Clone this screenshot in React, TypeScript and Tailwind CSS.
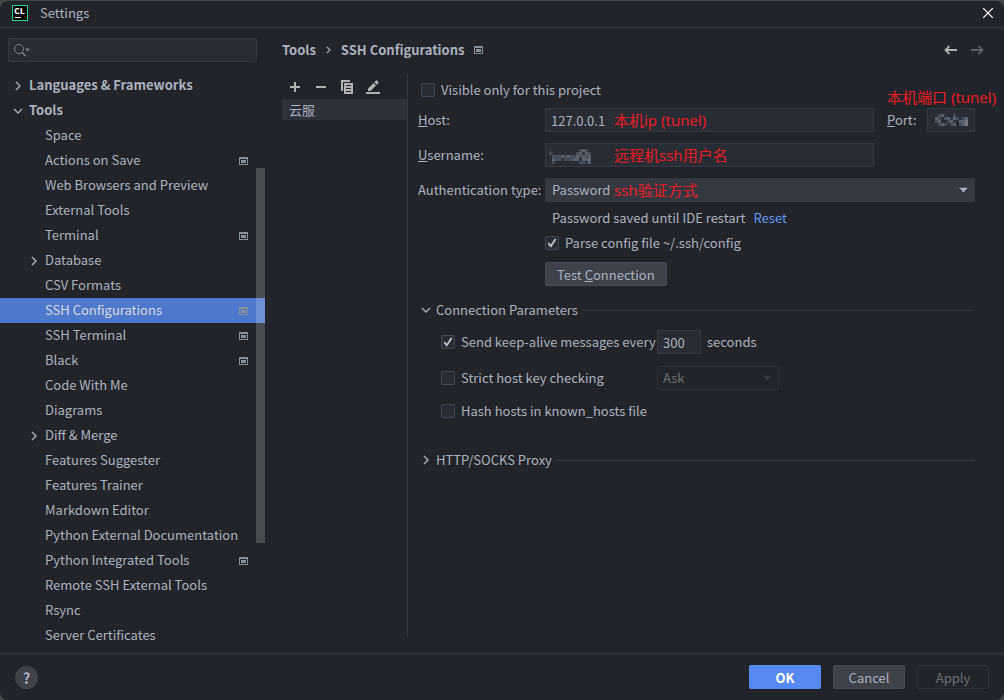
import type { ReactNode } from "react";

type TreeItem = {
  label: string;
  level?: "group" | "item";
  state?: "open" | "closed";
  project?: boolean;
  selected?: boolean;
};

const TREE: TreeItem[] = [
  { label: "Languages & Frameworks", level: "group", state: "closed" },
  { label: "Tools", level: "group", state: "open" },
  { label: "Space" },
  { label: "Actions on Save", project: true },
  { label: "Web Browsers and Preview" },
  { label: "External Tools" },
  { label: "Terminal", project: true },
  { label: "Database", state: "closed" },
  { label: "CSV Formats" },
  { label: "SSH Configurations", project: true, selected: true },
  { label: "SSH Terminal", project: true },
  { label: "Black", project: true },
  { label: "Code With Me" },
  { label: "Diagrams" },
  { label: "Diff & Merge", state: "closed" },
  { label: "Features Suggester" },
  { label: "Features Trainer" },
  { label: "Markdown Editor" },
  { label: "Python External Documentation" },
  { label: "Python Integrated Tools", project: true },
  { label: "Remote SSH External Tools" },
  { label: "Rsync" },
  { label: "Server Certificates" },
];

// rows of 3px blocks, "." is an empty block
const USER_BLOCKS = ["a.........bcb.", "ba.a.a.a.bcacb", ".bbbcbcbbcbcbc", ".cbbabbbccaccc", ".b........bbac"];
const PORT_BLOCKS = [".bca..b....", "cb.bcacb.bc", "bc..bca.ccd", ".bcb.bc.bcd"];
const BLOCK_COLORS: Record<string, string> = { a: "#30363f", b: "#454d59", c: "#59616d", d: "#73777f" };

function Mosaic({ rows }: { rows: string[] }) {
  return (
    <svg width={rows[0].length * 3} height={rows.length * 3} shapeRendering="crispEdges" aria-hidden="true">
      {rows.flatMap((row, y) =>
        row.split("").map((c, x) => (c === "." ? null : <rect key={`${x}-${y}`} x={x * 3} y={y * 3} width="3" height="3" fill={BLOCK_COLORS[c]} />)),
      )}
    </svg>
  );
}

function Chevron({ open }: { open?: boolean }) {
  return (
    <svg width="10" height="10" viewBox="0 0 10 10" fill="none" stroke="#a4a9b0" strokeWidth="1.5" aria-hidden="true">
      <path d={open ? "M1 3l4 4 4-4" : "M3 1l4 4-4 4"} />
    </svg>
  );
}

function ProjectIcon() {
  return (
    <svg width="9" height="8" shapeRendering="crispEdges" aria-hidden="true">
      <path d="M0 0h9v8H0zM1 2v5h7V2z" fillRule="evenodd" fill="#87919c" />
      <path d="M2 3h5v3H2z" fill="#87919c" />
    </svg>
  );
}

function DropArrow({ color }: { color: string }) {
  return (
    <svg className="pointer-events-none absolute right-[7px] top-1/2 -translate-y-1/2" width="9" height="5" aria-hidden="true">
      <path d="M0 0h9L4.5 5z" fill={color} />
    </svg>
  );
}

function Checkbox({ label, checked }: { label: string; checked?: boolean }) {
  return (
    <label className="flex h-6 items-center gap-1.5 whitespace-nowrap">
      <span className="relative size-3.5">
        <input
          type="checkbox"
          defaultChecked={checked}
          className="peer block size-3.5 appearance-none rounded-xs border border-[#414855] bg-[#282c34]"
        />
        <svg className="pointer-events-none absolute inset-0 hidden peer-checked:block" width="14" height="14" fill="none" stroke="#b9bfc9" strokeWidth="2" aria-hidden="true">
          <path d="M3.2 7.2l2.6 3L10.6 3" />
        </svg>
      </span>
      {label}
    </label>
  );
}

function Note({ children, className }: { children: ReactNode; className: string }) {
  return (
    <span className={`pointer-events-none absolute whitespace-nowrap [font-family:'Noto_Sans','Noto_Sans_CJK_SC',sans-serif] text-[15px] leading-6 text-[#ed1c24] ${className}`}>
      {children}
    </span>
  );
}

function Section({ title, open }: { title: string; open?: boolean }) {
  return (
    <div className="flex h-6 items-center">
      <button type="button" aria-expanded={!!open} className="ml-[3px] flex items-center gap-[5px]">
        <Chevron open={open} />
        {title}
      </button>
      <div className="ml-1 h-px flex-1 bg-[#333841]" />
    </div>
  );
}

function Sidebar() {
  return (
    <aside className="relative flex w-[265px] shrink-0 flex-col">
      <div className="relative mx-2 mt-2.5 h-6">
        <input aria-label="Search settings" className="h-6 w-full rounded-xs border border-[#333841] bg-[#282c34] pl-7 outline-none" />
        <svg className="pointer-events-none absolute left-1.5 top-1.5" width="17" height="13" fill="none" stroke="#7d838c" aria-hidden="true">
          <circle cx="5" cy="5" r="4.5" />
          <path d="M8 8.5l3.5 3.5" strokeWidth="1.4" />
          <path d="M11 4.500h5l-2.500 3z" fill="#7d838c" stroke="none" />
        </svg>
      </div>
      <ul className="mt-[11px]">
        {TREE.map((item) => (
          <li key={item.label} className={item.selected ? "bg-[#4d78cc] text-[#d7dae0]" : ""}>
            <a href="#" className="flex h-[25px] items-center pr-[17px]">
              <span className={item.level === "group" ? "flex w-[29px] justify-end pr-1.5" : "flex w-[45px] justify-end pr-1.5"}>
                {item.state && <Chevron open={item.state === "open"} />}
              </span>
              <span className={item.level === "group" ? "flex-1 pb-px font-bold" : "flex-1 pb-px"}>{item.label}</span>
              {item.project && <ProjectIcon />}
            </a>
          </li>
        ))}
      </ul>
      <div className="absolute right-0 top-[140px] h-[375px] w-[9px] bg-white/18" />
    </aside>
  );
}

function HostList() {
  return (
    <div className="w-[125px] shrink-0">
      <div className="flex h-[25px] items-center gap-3 pl-1.5 text-[#afb1b3]">
        <button type="button" aria-label="Add" className="size-3.5">
          <svg width="14" height="14" fill="none" stroke="currentColor" strokeWidth="2">
            <path d="M2 7h10M7 2v10" />
          </svg>
        </button>
        <button type="button" aria-label="Remove" className="size-3.5">
          <svg width="14" height="14" fill="none" stroke="currentColor" strokeWidth="2">
            <path d="M2 7h10" />
          </svg>
        </button>
        <button type="button" aria-label="Copy" className="size-3.5">
          <svg width="14" height="14" fill="currentColor">
            <path d="M1 0h9v2H3v9H1z" />
            <path d="M4 3h9v11H4zM6 5v1h5V5zM6 8v1h5V8zM6 11v1h5v-1z" fillRule="evenodd" />
          </svg>
        </button>
        <button type="button" aria-label="Edit" className="size-3.5">
          <svg width="14" height="14" fill="currentColor">
            <path d="M2 8.500L7.500 3l2.500 2.500L4.500 11H2zM8.300 2.200L10 .5a.7.7 0 0 1 1 0L12.500 2a.7.7 0 0 1 0 1l-1.700 1.700zM0 12h14v2H0z" />
          </svg>
        </button>
      </div>
      <ul>
        <li className="flex h-[21px] items-center bg-[#2d3139] pl-[7px]">云服</li>
      </ul>
    </div>
  );
}

const FIELD = "h-6 w-full border border-[#333841] bg-[#282c34] px-[5px] outline-none";

function ConfigForm() {
  return (
    <form className="min-w-0 flex-1 border-l border-[#333841] pl-2.5 pr-[29px]">
      <div className="ml-[3px] mt-1">
        <Checkbox label="Visible only for this project" />
      </div>

      <div className="relative mt-1.5 flex items-center">
        <label htmlFor="host" className="w-[127px]">
          <u>H</u>ost:
        </label>
        <div className="relative flex-1">
          <input id="host" defaultValue="127.0.0.1" className={FIELD} />
          <Note className="left-[69px] top-0">本机ip (tunel)</Note>
        </div>
        <label htmlFor="port" className="ml-[13px] w-10">
          <u>P</u>ort:
        </label>
        <div className="relative w-12">
          <input id="port" className={FIELD} />
          <span className="pointer-events-none absolute left-2 top-1.5">
            <Mosaic rows={PORT_BLOCKS} />
          </span>
          <Note className="-left-10 -top-[23px]">本机端口 (tunel)</Note>
        </div>
      </div>

      <div className="mt-[11px] flex items-center">
        <label htmlFor="user" className="w-[127px]">
          <u>U</u>sername:
        </label>
        <div className="relative mr-[101px] flex-1">
          <input id="user" className={FIELD} />
          <span className="pointer-events-none absolute left-1 top-1.5">
            <Mosaic rows={USER_BLOCKS} />
          </span>
          <Note className="left-[69px] top-0">远程机ssh用户名</Note>
        </div>
      </div>

      <div className="mt-[11px] flex items-center">
        <label htmlFor="auth" className="w-[127px] whitespace-nowrap">
          Authentication t<u>y</u>pe:
        </label>
        <div className="relative flex-1">
          <select id="auth" className="block h-6 w-full appearance-none rounded-xs bg-[#333841] pl-[7px] outline-none">
            <option>Password</option>
          </select>
          <DropArrow color="#a9b0bd" />
          <Note className="left-[69px] top-0">ssh验证方式</Note>
        </div>
      </div>

      <div className="ml-[127px]">
        <div className="mt-1 flex h-6 items-center gap-2 pl-[7px]">
          <span>Password saved until IDE restart</span>
          <a href="#" className="text-[#6494ed]">
            Reset
          </a>
        </div>
        <div className="mt-px">
          <Checkbox label="Parse config file ~/.ssh/config" checked />
        </div>
        <button type="button" className="mt-[7px] block h-6 rounded-xs border border-[#464c57] bg-[#3d424b] px-[11px] leading-none">
          Test <u>C</u>onnection
        </button>
      </div>

      <div className="mt-3">
        <Section title="Connection Parameters" open />
      </div>
      <div className="ml-[23px] mt-2 grid grid-cols-[216px_auto] items-center justify-start gap-y-3">
        <Checkbox label="Send keep-alive messages every" checked />
        <label className="flex items-center gap-1.5">
          <input aria-label="Keep-alive interval" defaultValue="300" className="h-6 w-11 border border-[#333841] bg-[#282c34] px-[5px] outline-none" />
          seconds
        </label>
        <Checkbox label="Strict host key checking" />
        <div className="relative w-[122px]">
          <select
            disabled
            aria-label="Strict host key checking mode"
            className="block h-6 w-full appearance-none rounded-xs border border-[#2d3139] pl-[5px] text-[#6c6f73] opacity-100"
          >
            <option>Ask</option>
          </select>
          <DropArrow color="#333841" />
        </div>
      </div>
      <div className="ml-[23px] mt-[9px]">
        <Checkbox label="Hash hosts in known_hosts file" />
      </div>
      <div className="mt-[25px]">
        <Section title="HTTP/SOCKS Proxy" />
      </div>
    </form>
  );
}

export default function App() {
  return (
    <div className="h-screen min-h-[700px] bg-[#45484b] pt-px [font-family:'Noto_Sans_CJK_SC',sans-serif] text-[13px] leading-5 text-[#abb2bf]">
      <div className="flex h-full flex-col overflow-hidden rounded-lg bg-[#21252b]">
        <header className="flex h-[27px] shrink-0 items-center border-b border-[#333841] px-[11px] pb-0.5">
          <svg width="16" height="16" className="ml-px" aria-hidden="true">
            <rect x=".5" y=".5" width="15" height="15" fill="#000" stroke="#21d789" />
            <text x="2" y="9" fontSize="9" fontWeight="700" fill="#fff" fontFamily="Open Sans, sans-serif">
              CL
            </text>
            <path d="M3 12.500h6" stroke="#fff" />
          </svg>
          <h1 className="ml-3 flex-1">Settings</h1>
          <button type="button" aria-label="Close">
            <svg width="10" height="10" fill="none" stroke="#fff" strokeWidth="1.2">
              <path d="M0 0l10 10M10 0L0 10" />
            </svg>
          </button>
        </header>

        <div className="flex min-h-0 flex-1">
          <Sidebar />
          <main className="flex min-w-0 flex-1 flex-col pb-4 pl-[17px]">
            <div className="flex h-[46px] shrink-0 items-center pb-0.5 pr-5 font-bold">
              <span>Tools</span>
              <svg className="mx-2.5" width="5" height="8" fill="none" stroke="#a4a9b0" strokeWidth="1.2" aria-hidden="true">
                <path d="M1 1l3 3-3 3" />
              </svg>
              <span>SSH Configurations</span>
              <span className="ml-2.5 flex-1">
                <ProjectIcon />
              </span>
              <button type="button" aria-label="Back" className="mr-3.5">
                <svg width="13" height="10" fill="none" stroke="#afb1b3" strokeWidth="1.800">
                  <path d="M13 5H1.500M5.500 1l-4 4 4 4" />
                </svg>
              </button>
              <button type="button" aria-label="Forward">
                <svg width="13" height="10" fill="none" stroke="#5c6065" strokeWidth="1.800">
                  <path d="M0 5h11.500M7.500 1l4 4-4 4" />
                </svg>
              </button>
            </div>
            <div className="flex flex-1">
              <HostList />
              <ConfigForm />
            </div>
          </main>
        </div>

        <footer className="flex h-[47px] shrink-0 items-center gap-3 border-t border-[#333841] px-[15px]">
          <button type="button" aria-label="Help" className="mr-auto size-[23px] rounded-full bg-[#3d424b] text-[15px] font-bold leading-none">
            ?
          </button>
          <button type="button" className="h-6 w-[72px] rounded-xs bg-[#568af2] font-bold leading-none text-white">
            OK
          </button>
          <button type="button" className="h-6 w-[72px] rounded-xs border border-[#464c57] bg-[#3d424b] leading-none">
            Cancel
          </button>
          <button type="button" disabled className="h-6 w-[72px] rounded-xs border border-[#2d3139] leading-none text-[#6c6f73]">
            Apply
          </button>
        </footer>
      </div>
    </div>
  );
}
